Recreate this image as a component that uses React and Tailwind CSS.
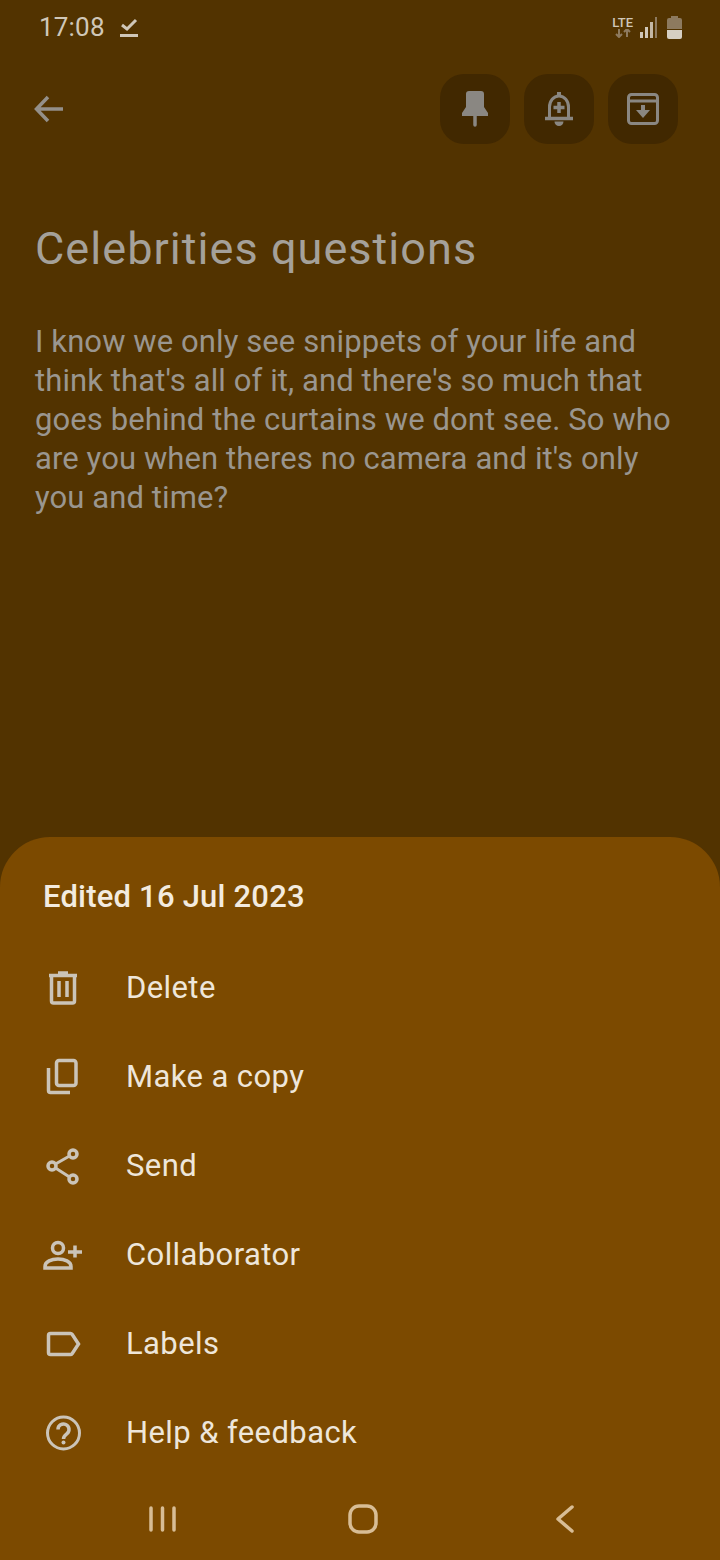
const font = { fontFamily: 'Roboto, sans-serif' };

const menuRows = [
  {
    label: 'Delete',
    icon: (
      <g fill="none" stroke="currentColor" strokeWidth="3.500">
        <path d="M9 7.500h28" />
        <path d="M18 5h10" />
        <path d="M11.500 8v25a2 2 0 0 0 2 2h19a2 2 0 0 0 2-2V8" />
        <path d="M19 13v16M27 13v16" strokeWidth="3.500" />
      </g>
    ),
  },
  {
    label: 'Make a copy',
    icon: (
      <g fill="none" stroke="currentColor" strokeWidth="3.500">
        <rect x="16.500" y="3.500" width="19.500" height="25" rx="2.500" />
        <path d="M8.500 11v22.500a2 2 0 0 0 2 2H30" />
      </g>
    ),
  },
  {
    label: 'Send',
    icon: (
      <g fill="none" stroke="currentColor" strokeWidth="3.500">
        <circle cx="33" cy="8" r="4" />
        <circle cx="12" cy="20" r="4" />
        <circle cx="33" cy="33" r="4" />
        <path d="M15.500 18L29.500 10M15.500 22L29.500 31" strokeWidth="3" />
      </g>
    ),
  },
  {
    label: 'Collaborator',
    icon: (
      <g fill="none" stroke="currentColor" strokeWidth="3.500">
        <circle cx="18" cy="13" r="5.500" />
        <path d="M5 33v-1.500c0-5 6.500-7.500 13-7.500s13 2.500 13 7.500V33z" />
        <path d="M28 17h14M35 10.500v12" />
      </g>
    ),
  },
  {
    label: 'Labels',
    icon: (
      <g fill="none" stroke="currentColor" strokeWidth="3.500">
        <path d="M10.500 9.500h20a2 2 0 0 1 1.600.800L38.500 20l-6.400 9.700a2 2 0 0 1-1.600.800h-20a2 2 0 0 1-2-2v-17a2 2 0 0 1 2-2z" />
      </g>
    ),
  },
  {
    label: 'Help & feedback',
    icon: (
      <g fill="none" stroke="currentColor" strokeWidth="3.500">
        <circle cx="23.500" cy="20" r="16" strokeWidth="3" />
        <path d="M18 16.500a5.500 5.500 0 1 1 9 4.200c-2 1.600-3.500 2.500-3.500 5.300" />
        <circle cx="23.500" cy="29.500" r="2" fill="currentColor" stroke="none" />
      </g>
    ),
  },
];

function MenuRow({ label, icon }) {
  return (
    <div className="flex items-center h-[89px]">
      <svg width="46" height="42" viewBox="0 0 46 42" className="ml-[40px] text-[#cbc4b8]">
        {icon}
      </svg>
      <span className="ml-[40px] text-[31px] tracking-[0.4px] text-[#eee6da]">{label}</span>
    </div>
  );
}

function IconButton({ children }) {
  return (
    <div className="w-[70px] h-[70px] rounded-[24px] bg-[#412800] flex items-center justify-center text-[#8a8782]">
      {children}
    </div>
  );
}

export default function App() {
  return (
    <div className="w-[720px] h-[1560px] flex flex-col bg-[#523300] overflow-hidden" style={font}>
      {/* status bar */}
      <div className="h-[54px] flex items-center pl-[39px] pr-[38px]">
        <span className="text-[26px] tracking-[0.2px] text-[#d0c7b8]">17:08</span>
        <svg width="18" height="22" viewBox="0 0 18 22" className="ml-[15px] text-[#d0c7b8]">
          <path d="M2 9l5 4 9-9" fill="none" stroke="currentColor" strokeWidth="3" />
          <path d="M0 19.500h18" stroke="currentColor" strokeWidth="3" />
        </svg>
        <div className="ml-auto flex items-center gap-[7px]">
          <div className="flex flex-col items-center">
            <span className="text-[13px] leading-[13px] font-medium text-[#d0c7b8]">LTE</span>
            <svg width="16" height="9" viewBox="0 0 16 9" className="text-[#8d7a5f]">
              <path d="M4 0v8M1 5l3 3 3-3M12 8V0M9 3l3-3 3 3" fill="none" stroke="currentColor" strokeWidth="2" />
            </svg>
          </div>
          <svg width="18" height="21" viewBox="0 0 18 21">
            <rect x="0" y="15" width="3" height="6" fill="#d0c7b8" />
            <rect x="5" y="10" width="3" height="11" fill="#d0c7b8" />
            <rect x="10" y="5" width="3" height="16" fill="#c4b8a6" />
            <rect x="15" y="0" width="2" height="21" fill="#8d7a5f" />
          </svg>
          <svg width="15" height="23" viewBox="0 0 15 23" className="ml-[2px]">
            <path d="M4 0h7v2h2a2 2 0 0 1 2 2v9H0V4a2 2 0 0 1 2-2h2z" fill="#8d7a5f" />
            <path d="M0 14h15v7a2 2 0 0 1-2 2H2a2 2 0 0 1-2-2z" fill="#d6cfc3" />
          </svg>
        </div>
      </div>

      {/* toolbar */}
      <div className="flex items-center mt-[20px] pl-[34px] pr-[42px]">
        <svg width="30" height="28" viewBox="0 0 30 28" className="text-[#94908a]">
          <path d="M29 14H3M14 2L2.500 14 14 26" fill="none" stroke="currentColor" strokeWidth="3.500" />
        </svg>
        <div className="ml-auto flex gap-[14px]">
          <IconButton>
            <svg width="26" height="36" viewBox="0 0 26 36">
              <path d="M4 3a3 3 0 0 1 3-3h12a3 3 0 0 1 3 3v13l4 6v3H0v-3l4-6z" fill="currentColor" />
              <path d="M13 24v10" stroke="currentColor" strokeWidth="3.500" strokeLinecap="round" />
            </svg>
          </IconButton>
          <IconButton>
            <svg width="28" height="36" viewBox="0 0 28 36" fill="none" stroke="currentColor">
              <path d="M4.500 27V16c0-6 4-11 9.500-11s9.500 5 9.500 11v11" strokeWidth="3" />
              <path d="M0 27.500h28" strokeWidth="3.500" />
              <path d="M14 11v11M8.500 16.500h11" strokeWidth="3.500" />
              <path d="M9.500 30.500h9a4.500 4.500 0 0 1-9 0z" fill="currentColor" stroke="none" />
              <path d="M12 1h4v4h-4z" fill="currentColor" stroke="none" />
            </svg>
          </IconButton>
          <IconButton>
            <svg width="32" height="32" viewBox="0 0 32 32" fill="none" stroke="currentColor">
              <rect x="1.500" y="1.500" width="29" height="29" rx="3" strokeWidth="3" />
              <path d="M1.500 8h29" strokeWidth="3" />
              <path d="M16 12v8" strokeWidth="4" />
              <path d="M9 17h14l-7 8z" fill="currentColor" stroke="none" />
            </svg>
          </IconButton>
        </div>
      </div>

      {/* note */}
      <div className="flex-1 pl-[35px] pr-[40px]">
        <h1 className="mt-[75px] text-[45px] leading-[60px] tracking-[1.05px] font-normal text-[#a5a19a]">Celebrities questions</h1>
        <p className="mt-[43px] text-[31px] leading-[39px] tracking-[0.1px] text-[#9a968f]">
          I know we only see snippets of your life and think that's all of it, and there's so much that goes behind the curtains we dont see. So who are you when theres no camera and it's only you and time?
        </p>
      </div>

      {/* bottom sheet */}
      <div className="h-[723px] bg-[#7c4a00] rounded-t-[50px]">
        <div className="pt-[38px] pl-[43px] text-[31px] leading-[44px] tracking-[0.2px] font-medium text-[#f3ebdf]">Edited 16 Jul 2023</div>
        <div className="mt-[25px]">
          {menuRows.map((row) => (
            <MenuRow key={row.label} label={row.label} icon={row.icon} />
          ))}
        </div>
        <div className="flex items-center h-[46px] mt-[18px] text-[#d8bd95]">
          <svg width="28" height="28" viewBox="0 0 28 28" className="ml-[149px]" fill="none" stroke="currentColor" strokeWidth="3.500" strokeLinecap="round">
            <path d="M2 3v22M13.500 3v22M25 3v22" />
          </svg>
          <svg width="30" height="30" viewBox="0 0 30 30" className="ml-[171px]" fill="none" stroke="currentColor" strokeWidth="3.500">
            <rect x="2" y="2" width="26" height="26" rx="9" />
          </svg>
          <svg width="18" height="28" viewBox="0 0 18 28" className="ml-[178px]" fill="none" stroke="currentColor" strokeWidth="3.500" strokeLinecap="round" strokeLinejoin="round">
            <path d="M16 2L2 14l14 12" />
          </svg>
        </div>
      </div>
    </div>
  );
}
